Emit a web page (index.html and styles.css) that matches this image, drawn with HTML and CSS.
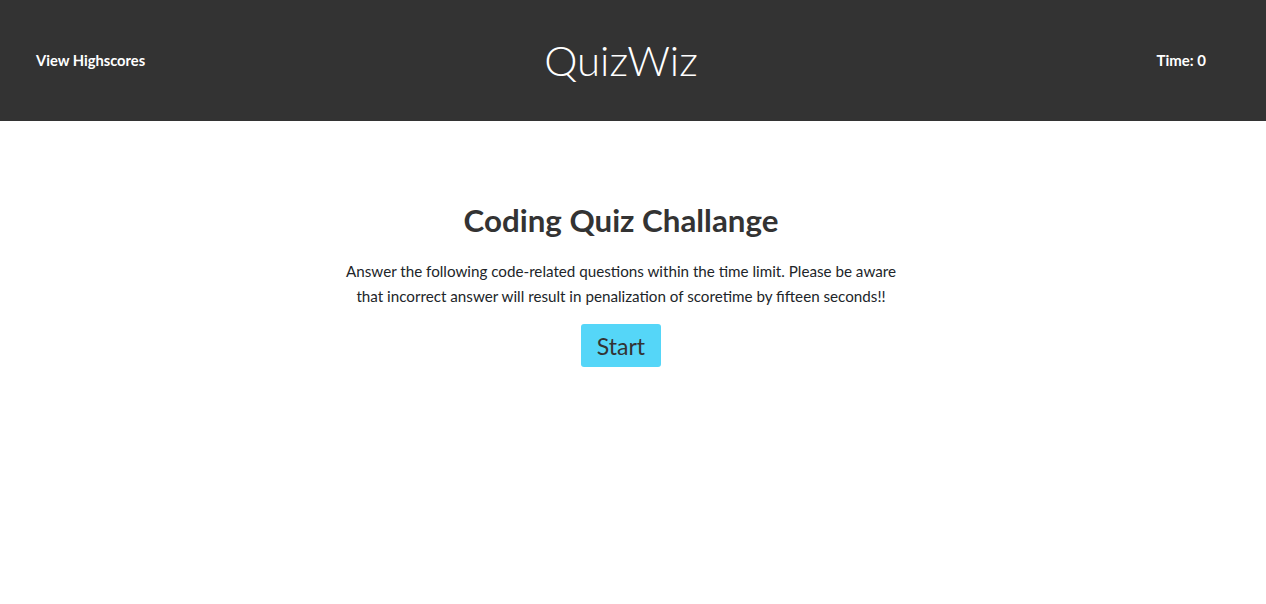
FILE: index.html
```html
<!DOCTYPE html>
<html lang="en">
<head>
<meta charset="utf-8">
<title>QuizWiz</title>
<link rel="stylesheet" href="styles.css">
</head>
<body>
<header class="topbar">
  <a class="highscores" href="#">View Highscores</a>
  <h1 class="brand">QuizWiz</h1>
  <div class="timer">Time: <span>0</span></div>
</header>
<main class="intro">
  <h2 class="intro-title">Coding Quiz Challange</h2>
  <p class="intro-text">Answer the following code-related questions within the time limit. Please be aware that incorrect answer will result in penalization of scoretime by fifteen seconds!!</p>
  <button class="start-btn" type="button">Start</button>
</main>
</body>
</html>
```
FILE: styles.css
```css
* { box-sizing: border-box; }
body {
  margin: 0;
  font-family: "Lato", "Liberation Sans", sans-serif;
  color: #212529;
  background: #fff;
}
.topbar {
  height: 121px;
  background: #333333;
  display: grid;
  grid-template-columns: 1fr auto 1fr;
  align-items: center;
  padding: 0 60px 0 36px;
}
.highscores {
  justify-self: start;
  color: #fff;
  text-decoration: none;
  font-weight: 700;
  font-size: 14.7px;
  padding-bottom: 2px;
}
.brand {
  margin: 0;
  color: #fff;
  font-weight: 300;
  font-size: 42px;
  line-height: 1;
  padding-bottom: 1px;
}
.timer {
  justify-self: end;
  color: #fff;
  font-weight: 700;
  font-size: 15px;
  padding-bottom: 2px;
}
.intro {
  display: flex;
  flex-direction: column;
  align-items: center;
  padding: 80px 24px 0 0;
}
.intro-title {
  margin: 0 0 20px;
  font-size: 31.3px;
  font-weight: 700;
  color: #333;
  line-height: 38px;
}
.intro-text {
  margin: 0 0 15px;
  max-width: 562px;
  text-align: center;
  font-size: 15.2px;
  line-height: 25px;
}
.start-btn {
  font-family: inherit;
  font-size: 23px;
  color: #333;
  background: #55d6f8;
  border: none;
  border-radius: 3px;
  width: 80px;
  height: 43px;
  padding: 0;
  cursor: pointer;
}
```
